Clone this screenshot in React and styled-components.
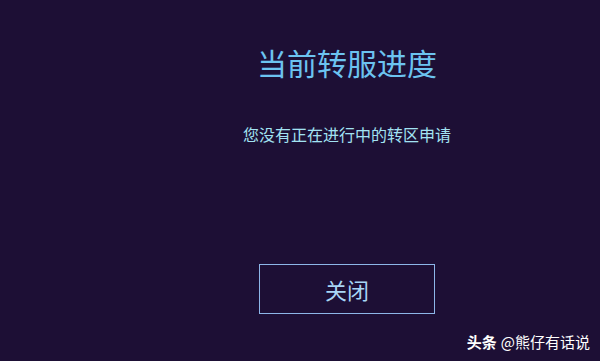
import React from "react";
import styled, { createGlobalStyle } from "styled-components";

const Global = createGlobalStyle`
  html, body { margin: 0; padding: 0; background: #1d0f35; }
  body { font-family: "Noto Sans CJK SC", "Noto Sans", sans-serif; }
`;

const Screen = styled.div`
  position: relative;
  width: 600px;
  height: 361px;
  background: #1d0f35;
  overflow: hidden;
  box-sizing: border-box;
  padding-left: 94px;
  display: flex;
  flex-direction: column;
  align-items: center;
`;

const Title = styled.h1`
  margin: 40px 0 0;
  font-size: 30px;
  line-height: 44px;
  font-weight: 400;
  color: #6cc3f0;
`;

const Message = styled.p`
  margin: 38px 0 0;
  font-size: 16px;
  line-height: 24px;
  color: #a2e2f2;
`;

const CloseButton = styled.button`
  margin-top: 118px;
  width: 176px;
  height: 50px;
  box-sizing: border-box;
  border: 1px solid #8db6e8;
  background: transparent;
  color: #a8d6f6;
  font-family: "Noto Sans CJK SC", "Noto Sans", sans-serif;
  font-size: 22px;
  padding: 0;
  display: flex;
  align-items: center;
  justify-content: center;
  cursor: pointer;
`;

const Watermark = styled.div`
  position: absolute;
  right: 10px;
  bottom: 8px;
  color: #ffffff;
  font-size: 15px;
  line-height: 22px;
  display: flex;
  align-items: center;
  gap: 4px;
`;

const Brand = styled.span`
  font-weight: 700;
`;

export default function App() {
  return (
    <>
      <Global />
      <Screen>
        <Title>当前转服进度</Title>
        <Message>您没有正在进行中的转区申请</Message>
        <CloseButton>关闭</CloseButton>
        <Watermark>
          <Brand>头条</Brand>
          <span>@熊仔有话说</span>
        </Watermark>
      </Screen>
    </>
  );
}
